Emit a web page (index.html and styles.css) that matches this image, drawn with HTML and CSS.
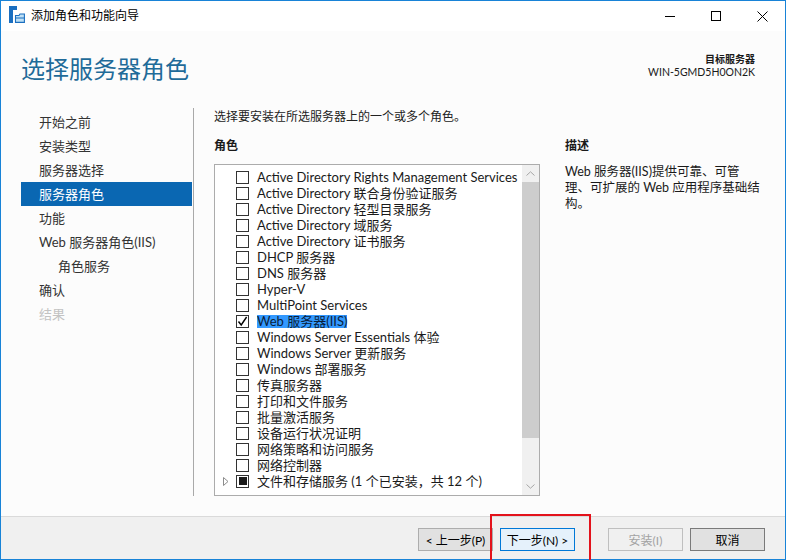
FILE: index.html
```html
<!DOCTYPE html>
<html lang="zh-CN">
<head>
<meta charset="utf-8">
<title>添加角色和功能向导</title>
<link rel="stylesheet" href="styles.css">
</head>
<body>
<div class="window">
  <div class="titlebar">
    <svg class="app-icon" width="16" height="17" viewBox="0 0 16 17">
      <rect x="0" y="0" width="4" height="17" fill="#1b6fc0"/>
      <rect x="0" y="0" width="8" height="4" fill="#1b6fc0"/>
      <path d="M6.5 9.5 h3.5 l1 -1.5 h4.4 v8.4 h-8.9 z" fill="#bfe0f5" stroke="#1b6fc0" stroke-width="1.1"/>
      <path d="M6.5 12 h8.9" stroke="#1b6fc0" stroke-width="1"/>
    </svg>
    <span class="title">添加角色和功能向导</span>
    <div class="controls">
      <span class="ctl"><svg width="10" height="10" viewBox="0 0 10 10"><path d="M0 5.5 H10" stroke="#000" stroke-width="1"/></svg></span>
      <span class="ctl"><svg width="10" height="10" viewBox="0 0 10 10"><rect x="0.5" y="0.5" width="9" height="9" fill="none" stroke="#000" stroke-width="1"/></svg></span>
      <span class="ctl"><svg width="11" height="11" viewBox="0 0 11 11"><path d="M0.5 0.5 L10.5 10.5 M10.5 0.5 L0.5 10.5" stroke="#000" stroke-width="1"/></svg></span>
    </div>
  </div>

  <div class="header">
    <h1>选择服务器角色</h1>
    <div class="target">
      <div class="t1">目标服务器</div>
      <div class="t2">WIN-5GMD5H0ON2K</div>
    </div>
  </div>

  <div class="main">
    <nav class="steps">
      <div class="step">开始之前</div>
      <div class="step">安装类型</div>
      <div class="step">服务器选择</div>
      <div class="step sel">服务器角色</div>
      <div class="step">功能</div>
      <div class="step">Web 服务器角色(IIS)</div>
      <div class="step sub">角色服务</div>
      <div class="step">确认</div>
      <div class="step dis">结果</div>
    </nav>

    <div class="content">
      <p class="intro">选择要安装在所选服务器上的一个或多个角色。</p>
      <div class="cols">
        <div class="roles-col">
          <div class="label">角色</div>
          <div class="listbox">
            <ul class="rows">
              <li class="row"><span class="exp"></span><span class="cb"></span><span class="txt">Active Directory Rights Management Services</span></li>
              <li class="row"><span class="exp"></span><span class="cb"></span><span class="txt">Active Directory 联合身份验证服务</span></li>
              <li class="row"><span class="exp"></span><span class="cb"></span><span class="txt">Active Directory 轻型目录服务</span></li>
              <li class="row"><span class="exp"></span><span class="cb"></span><span class="txt">Active Directory 域服务</span></li>
              <li class="row"><span class="exp"></span><span class="cb"></span><span class="txt">Active Directory 证书服务</span></li>
              <li class="row"><span class="exp"></span><span class="cb"></span><span class="txt">DHCP 服务器</span></li>
              <li class="row"><span class="exp"></span><span class="cb"></span><span class="txt">DNS 服务器</span></li>
              <li class="row"><span class="exp"></span><span class="cb"></span><span class="txt">Hyper-V</span></li>
              <li class="row"><span class="exp"></span><span class="cb"></span><span class="txt">MultiPoint Services</span></li>
              <li class="row sel"><span class="exp"></span><span class="cb"><svg width="11" height="11" viewBox="0 0 11 11"><path d="M1.5 5.5 L4.2 9 L9.6 1" fill="none" stroke="#000" stroke-width="1.4"/></svg></span><span class="txt">Web 服务器(IIS)</span></li>
              <li class="row"><span class="exp"></span><span class="cb"></span><span class="txt">Windows Server Essentials 体验</span></li>
              <li class="row"><span class="exp"></span><span class="cb"></span><span class="txt">Windows Server 更新服务</span></li>
              <li class="row"><span class="exp"></span><span class="cb"></span><span class="txt">Windows 部署服务</span></li>
              <li class="row"><span class="exp"></span><span class="cb"></span><span class="txt">传真服务器</span></li>
              <li class="row"><span class="exp"></span><span class="cb"></span><span class="txt">打印和文件服务</span></li>
              <li class="row"><span class="exp"></span><span class="cb"></span><span class="txt">批量激活服务</span></li>
              <li class="row"><span class="exp"></span><span class="cb"></span><span class="txt">设备运行状况证明</span></li>
              <li class="row"><span class="exp"></span><span class="cb"></span><span class="txt">网络策略和访问服务</span></li>
              <li class="row"><span class="exp"></span><span class="cb"></span><span class="txt">网络控制器</span></li>
              <li class="row"><span class="exp"><svg width="6" height="9" viewBox="0 0 6 9"><path d="M0.5 0.5 L5 4.5 L0.5 8.5 Z" fill="none" stroke="#8c8c8c" stroke-width="1"/></svg></span><span class="cb"><span class="ind"></span></span><span class="txt">文件和存储服务 (1 个已安装，共 12 个)</span></li>
            </ul>
            <div class="scrollbar">
              <div class="sb-arrow"><svg width="9" height="5" viewBox="0 0 9 5"><path d="M0.5 4.5 L4.5 0.8 L8.5 4.5" fill="none" stroke="#a6a6a6" stroke-width="1"/></svg></div>
              <div class="thumb"></div>
              <div class="track"></div>
              <div class="sb-arrow"><svg width="9" height="5" viewBox="0 0 9 5"><path d="M0.5 0.5 L4.5 4.2 L8.5 0.5" fill="none" stroke="#a6a6a6" stroke-width="1"/></svg></div>
            </div>
          </div>
        </div>
        <div class="desc-col">
          <div class="label">描述</div>
          <p class="desc">Web 服务器(IIS)提供可靠、可管<br>理、可扩展的 Web 应用程序基础结<br>构。</p>
        </div>
      </div>
    </div>
  </div>

  <div class="footer">
    <button class="btn">&lt; 上一步(P)</button>
    <button class="btn next">下一步(N) &gt;</button>
    <button class="btn install">安装(I)</button>
    <button class="btn cancel">取消</button>
  </div>

  <div class="annot"></div>
</div>
</body>
</html>
```

FILE: styles.css
```css
* { box-sizing: border-box; }
html, body { margin: 0; padding: 0; }
body {
  width: 786px;
  height: 560px;
  overflow: hidden;
  font-family: Lato, "Noto Sans CJK SC", sans-serif;
  background: #fff;
  color: #1a1a1a;
}
.window {
  position: relative;
  width: 786px;
  height: 560px;
  border: 1px solid #1883d7;
  display: flex;
  flex-direction: column;
  background: #fcfcfc;
}

/* title bar */
.titlebar {
  height: 30px;
  flex: none;
  display: flex;
  align-items: center;
  background: #fff;
}
.app-icon { margin-left: 8px; align-self: flex-start; margin-top: 5px; flex: none; }
.title { margin-left: 6px; font-size: 12px; line-height: 16px; color: #000; }
.controls { margin-left: auto; display: flex; height: 30px; }
.ctl { width: 46px; display: flex; align-items: center; justify-content: center; }

/* header */
.header {
  height: 74px;
  flex: none;
  display: flex;
  justify-content: space-between;
  padding: 0 30px 0 20px;
}
.header h1 {
  margin: 22px 0 0;
  font-size: 24px;
  line-height: 32px;
  font-weight: normal;
  color: #1f6b99;
}
.target { text-align: right; margin-top: 22px; color: #1a1a1a; }
.t1 { font-size: 10px; line-height: 13px; font-weight: bold; }
.t2 { font-size: 10.5px; line-height: 13px; }

/* main */
.main { flex: 1; display: flex; min-height: 0; }
.steps {
  width: 193px;
  flex: none;
  margin: 3px 0 20px;
  padding: 2px 1px 0 20px;
  border-right: 1px solid #a9a9a9;
}
.step {
  height: 24px;
  line-height: 24px;
  padding-left: 18px;
  font-size: 13px;
  color: #333;
  white-space: nowrap;
}
.step.sel { background: #0a67b2; color: #fff; }
.step.sub { padding-left: 37px; }
.step.dis { color: #c3c3c3; }

.content { flex: 1; padding: 4px 0 0 20px; display: flex; flex-direction: column; }
.intro { margin: 0; font-size: 12px; line-height: 16px; color: #222; }
.cols { display: flex; gap: 25px; margin-top: 13px; }
.label { font-weight: bold; font-size: 12px; line-height: 16px; height: 16px; margin-bottom: 10px; color: #1a1a1a; }

.listbox {
  width: 326px;
  height: 332px;
  border: 1px solid #acacac;
  background: #fff;
  display: flex;
}
.rows { flex: 1; list-style: none; margin: 0; padding: 4px 0 0; overflow: hidden; }
.row {
  height: 16px;
  display: flex;
  align-items: center;
  font-size: 13px;
  white-space: nowrap;
  color: #1a1a1a;
}
.exp { width: 21px; flex: none; padding-left: 8px; display: flex; align-items: center; }
.cb {
  width: 13px;
  height: 13px;
  flex: none;
  margin-right: 8px;
  border: 1px solid #333;
  background: #fff;
  display: flex;
  align-items: center;
  justify-content: center;
}
.ind { width: 8px; height: 8px; background: #1a1a1a; }
.txt { line-height: 13px; }
.row.sel .txt { background: #3399ff; color: #0b1f3a; }

.scrollbar { width: 17px; flex: none; background: #f0f0f0; display: flex; flex-direction: column; }
.sb-arrow { height: 17px; flex: none; display: flex; align-items: center; justify-content: center; }
.thumb { height: 256px; flex: none; background: #cdcdcd; }
.track { flex: 1; }

.desc-col { width: 200px; }
.desc { margin: 0; font-size: 12.5px; line-height: 16px; color: #1a1a1a; white-space: nowrap; }

/* footer */
.footer {
  height: 43px;
  flex: none;
  border-top: 1px solid #dadada;
  background: #f0f0f0;
  display: flex;
  justify-content: flex-end;
  align-items: flex-start;
  gap: 7px;
  padding: 11px 20px 0 0;
}
.btn {
  width: 75px;
  height: 23px;
  padding: 0;
  font-family: inherit;
  font-size: 12px;
  color: #000;
  background: #e1e1e1;
  border: 1px solid #adadad;
}
.btn.next { background: #e5f1fb; border-color: #0078d7; }
.btn.install { margin-left: 26px; color: #a3a3a3; background: #f0f0f0; border-color: #bfbfbf; }
.btn.cancel { border-color: #7a7a7a; }

/* annotation overlay */
.annot {
  position: absolute;
  left: 489px;
  top: 513px;
  width: 101px;
  height: 50px;
  border: 2px solid #e3121b;
}
```
